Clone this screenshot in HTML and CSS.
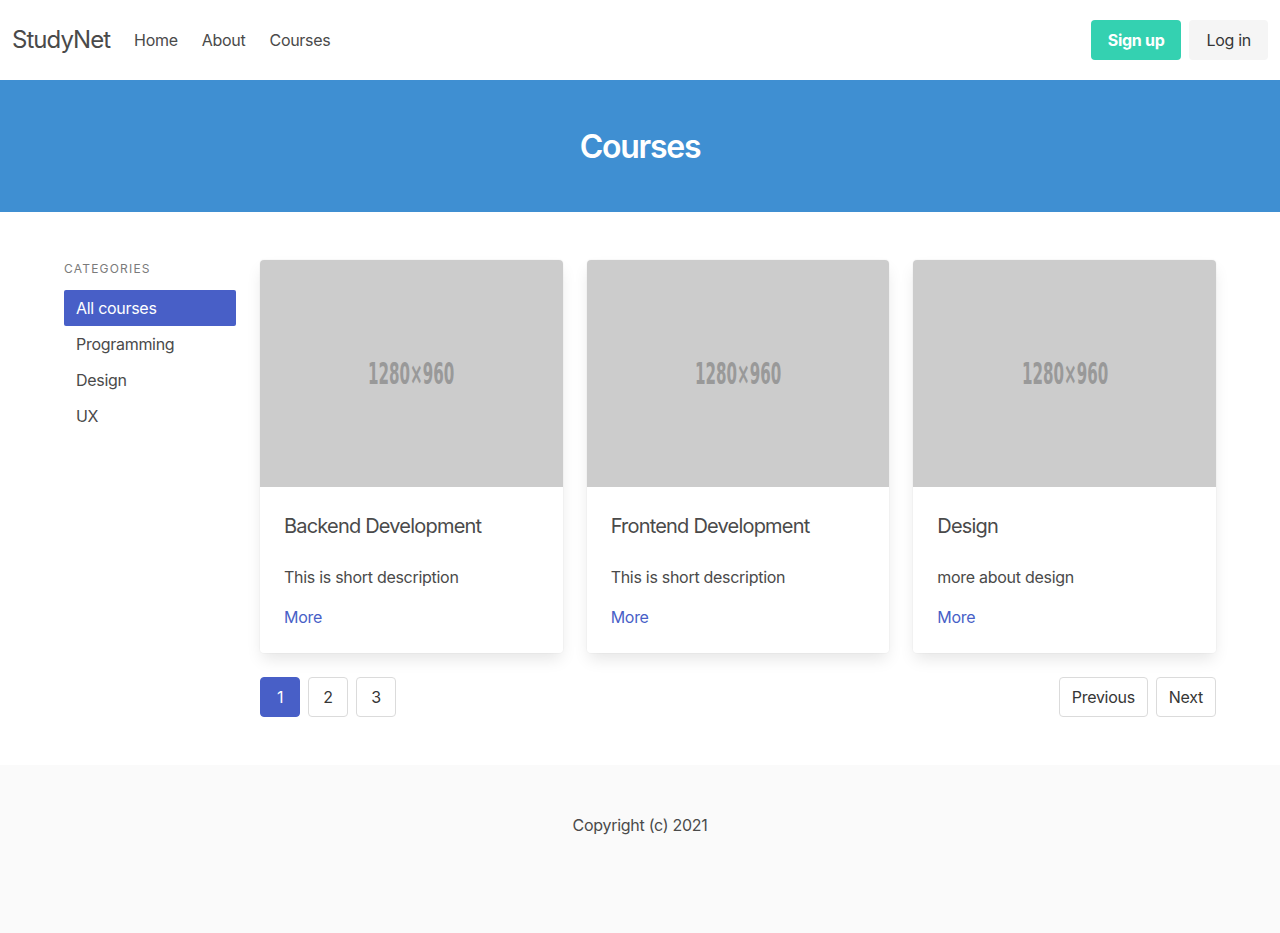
FILE: index.html
```html
<!DOCTYPE html>
<html lang="en">
<head>
<meta charset="utf-8">
<title>StudyNet - Courses</title>
<link rel="stylesheet" href="styles.css">
</head>
<body>
<nav class="navbar">
  <div class="navbar-start">
    <a class="navbar-brand" href="#">StudyNet</a>
    <a class="navbar-item" href="#">Home</a>
    <a class="navbar-item" href="#">About</a>
    <a class="navbar-item" href="#">Courses</a>
  </div>
  <div class="navbar-end">
    <a class="button button-primary" href="#">Sign up</a>
    <a class="button button-light" href="#">Log in</a>
  </div>
</nav>

<section class="hero">
  <h1 class="hero-title">Courses</h1>
</section>

<section class="section">
  <div class="container columns">
    <aside class="menu">
      <p class="menu-label">Categories</p>
      <ul class="menu-list">
        <li><a class="is-active" href="#">All courses</a></li>
        <li><a href="#">Programming</a></li>
        <li><a href="#">Design</a></li>
        <li><a href="#">UX</a></li>
      </ul>
    </aside>
    <div class="main">
      <div class="cards">
        <div class="card">
          <div class="card-image"><span class="placeholder-text">1280×960</span></div>
          <div class="card-content">
            <h2 class="card-title">Backend Development</h2>
            <p class="card-desc">This is short description</p>
            <a class="card-link" href="#">More</a>
          </div>
        </div>
        <div class="card">
          <div class="card-image"><span class="placeholder-text">1280×960</span></div>
          <div class="card-content">
            <h2 class="card-title">Frontend Development</h2>
            <p class="card-desc">This is short description</p>
            <a class="card-link" href="#">More</a>
          </div>
        </div>
        <div class="card">
          <div class="card-image"><span class="placeholder-text">1280×960</span></div>
          <div class="card-content">
            <h2 class="card-title">Design</h2>
            <p class="card-desc">more about design</p>
            <a class="card-link" href="#">More</a>
          </div>
        </div>
      </div>
      <nav class="pagination">
        <ul class="pagination-list">
          <li><a class="pagination-link is-current" href="#">1</a></li>
          <li><a class="pagination-link" href="#">2</a></li>
          <li><a class="pagination-link" href="#">3</a></li>
        </ul>
        <div class="pagination-nav">
          <a class="pagination-link wide" href="#">Previous</a>
          <a class="pagination-link wide" href="#">Next</a>
        </div>
      </nav>
    </div>
  </div>
</section>

<footer class="footer">
  <p>Copyright (c) 2021</p>
</footer>
</body>
</html>
```

FILE: styles.css
```css
* { box-sizing: border-box; }
html, body { margin: 0; padding: 0; }
body {
  font-family: Inter, "Noto Sans", "Liberation Sans", sans-serif;
  font-size: 16px;
  line-height: 1.5;
  letter-spacing: -0.018em;
  color: #4a4a4a;
  background: #fff;
}
a { text-decoration: none; color: inherit; }
ul { list-style: none; margin: 0; padding: 0; }
p, h1, h2 { margin: 0; }

.navbar {
  height: 80px;
  display: flex;
  align-items: center;
  justify-content: space-between;
  padding: 0 12px;
  background: #fff;
}
.navbar-start { display: flex; align-items: center; gap: 24px; }
.navbar-brand { font-size: 24px; line-height: 1.5; letter-spacing: -0.04em; color: #4a4a4a; }
.navbar-item { font-size: 16px; color: #4a4a4a; }
.navbar-end { display: flex; gap: 8px; }
.button {
  display: inline-flex;
  align-items: center;
  justify-content: center;
  height: 40px;
  padding: 0 17px;
  border-radius: 4px;
  font-size: 16px;
}
.button-primary { background: #34d1b1; color: #fff; font-weight: 700; }
.button-light { background: #f5f5f5; color: #363636; }

.hero {
  background: #3f8fd2;
  padding: 49px 24px 47px;
  text-align: center;
}
.hero-title {
  font-size: 32px;
  font-weight: 600;
  line-height: 36px;
  letter-spacing: -0.04em;
  color: #fff;
}

.section { padding: 48px 24px; }
.container { max-width: 1152px; margin: 0 auto; }
.columns { display: flex; gap: 24px; align-items: flex-start; }
.menu { width: 172px; flex: none; }
.menu-label {
  font-size: 12px;
  letter-spacing: 0.1em;
  text-transform: uppercase;
  color: #7a7a7a;
  line-height: 18px;
  margin-bottom: 12px;
}
.menu-list a {
  display: block;
  padding: 8px 12px;
  line-height: 20px;
  border-radius: 2px;
  color: #4a4a4a;
}
.menu-list a.is-active { background: #485fc7; color: #fff; }

.main { flex: 1; min-width: 0; }
.cards { display: grid; grid-template-columns: repeat(3, 1fr); gap: 24px; }
.card {
  background: #fff;
  border-radius: 4px;
  overflow: hidden;
  box-shadow: 0 0.5em 1em -0.125em rgba(10,10,10,0.1), 0 0 0 1px rgba(10,10,10,0.02);
}
.card-image {
  aspect-ratio: 4 / 3;
  background: #cccccc;
  display: flex;
  align-items: center;
  justify-content: center;
}
.placeholder-text {
  font-family: "DejaVu Sans Condensed", "DejaVu Sans", sans-serif;
  font-weight: 700;
  font-size: 30px;
  letter-spacing: 0;
  color: #999999;
  display: inline-block;
  transform: scaleX(0.56);
}
.card-content { padding: 24px; }
.card-title { font-size: 20px; font-weight: 400; line-height: 30px; letter-spacing: -0.04em; margin-bottom: 24px; color: #4a4a4a; }
.card-desc { margin-bottom: 16px; }
.card-link { color: #485fc7; }

.pagination {
  display: flex;
  justify-content: space-between;
  margin-top: 24px;
}
.pagination-list, .pagination-nav { display: flex; gap: 8px; }
.pagination-link {
  display: inline-flex;
  align-items: center;
  justify-content: center;
  min-width: 40px;
  height: 40px;
  padding: 0 8px;
  border: 1px solid #dbdbdb;
  border-radius: 4px;
  color: #363636;
}
.pagination-link.wide { padding: 0 12px; }
.pagination-link.is-current { background: #485fc7; border-color: #485fc7; color: #fff; }

.footer {
  background: #fafafa;
  padding: 48px 24px 96px;
  text-align: center;
}
```
